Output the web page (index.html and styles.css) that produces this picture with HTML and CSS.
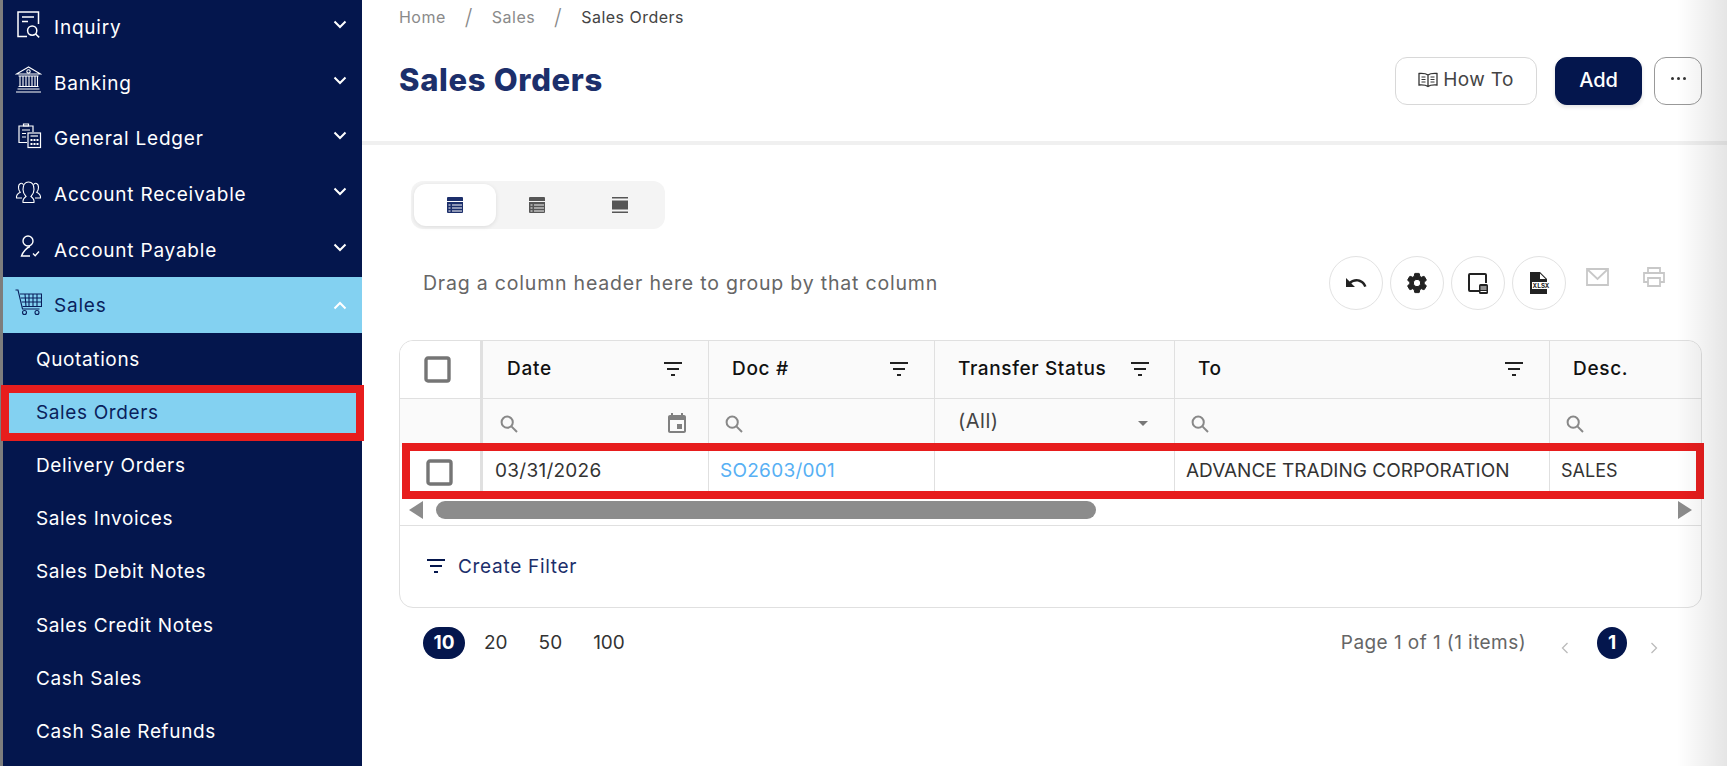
FILE: index.html
```html
<!DOCTYPE html>
<html lang="en">
<head>
<meta charset="utf-8">
<title>Sales Orders</title>
<link rel="stylesheet" href="styles.css">
</head>
<body>
<svg class="defs" width="0" height="0">
  <symbol id="i-filter" viewBox="0 0 18 14"><path d="M0 1h18M3 7h12M7 13h4" fill="none" stroke="currentColor" stroke-width="2"/></symbol>
  <symbol id="i-search" viewBox="0 0 18 18"><circle cx="7.2" cy="7.2" r="5.6" fill="none" stroke="currentColor" stroke-width="2"/><path d="M11.4 11.4l5.6 5.6" fill="none" stroke="currentColor" stroke-width="2"/></symbol>
  <symbol id="i-chev" viewBox="0 0 14 9"><path d="M1.5 1.5L7 7l5.5-5.5" fill="none" stroke="currentColor" stroke-width="2"/></symbol>
  <symbol id="i-check" viewBox="0 0 27 27"><rect x="2" y="2" width="23" height="23" rx="2" fill="#fff" stroke="#757575" stroke-width="3.4"/></symbol>
</svg>
<div class="app">
  <aside class="sidebar">
    <nav class="nav">
      <a class="nav-item">
        <svg class="nav-icon" viewBox="0 0 27 27"><g fill="none" stroke="currentColor" stroke-width="1.5"><path d="M12 25.5H3V1h20.5v12"/><path d="M7 6h12M7 10.5h6"/><circle cx="17.2" cy="19.6" r="4.6"/><path d="M20.6 23l3.6 3.4"/></g></svg>
        <span class="nav-label">Inquiry</span>
        <svg class="chev"><use href="#i-chev"/></svg>
      </a>
      <a class="nav-item">
        <svg class="nav-icon" viewBox="0 0 27 27"><g fill="none" stroke="currentColor" stroke-width="1.1"><path d="M13.5 1L1.5 8h24z"/><circle cx="13.5" cy="5.4" r="1.7"/><path d="M3.5 10h20M3.5 20.5h20M2.5 23h22M1 26h25"/><path d="M5 10v10.500M8 10v10.500M11 10v10.500M14 10v10.500M17 10v10.500M20 10v10.500M22.500 10v10.500"/></g></svg>
        <span class="nav-label">Banking</span>
        <svg class="chev"><use href="#i-chev"/></svg>
      </a>
      <a class="nav-item">
        <svg class="nav-icon" viewBox="0 0 27 27"><g fill="none" stroke="currentColor" stroke-width="1.2"><path d="M12 20.500H4V4h14v6"/><path d="M8.500 4V2h5v2zM7 8h8M7 11.500h4M7 15h4"/><rect x="13" y="11" width="12.500" height="14.500"/><path d="M15.500 14h7.500"/></g><path fill="currentColor" d="M15.500 17h2v2h-2zM18.500 17h2v2h-2zM21.500 17h2v2h-2zM15.500 21h2v2h-2zM18.500 21h2v2h-2zM21.500 21h2v2h-2z"/></svg>
        <span class="nav-label">General Ledger</span>
        <svg class="chev"><use href="#i-chev"/></svg>
      </a>
      <a class="nav-item">
        <svg class="nav-icon" viewBox="0 0 27 27"><g fill="none" stroke="currentColor" stroke-width="1.1"><path d="M8 24.500c-.5-3 1-4.500 3-6-1.500-1.500-3-3.500-3-7 0-4.500 2-7.500 5.500-7.500S19 7 19 11.500c0 3.500-1.500 5.500-3 7 2 1.500 3.500 3 3 6z"/><path d="M8.500 7C7 4 3.500 5 3.500 9.500c0 2 .5 3.500 1.800 4.800C3 15.500 1 17 1.500 20H7"/><path d="M18.500 7c1.500-3 5-2 5 2.500 0 2-.5 3.500-1.800 4.800 2.300 1.200 4.300 2.700 3.800 5.700H20"/></g></svg>
        <span class="nav-label">Account Receivable</span>
        <svg class="chev"><use href="#i-chev"/></svg>
      </a>
      <a class="nav-item">
        <svg class="nav-icon" viewBox="0 0 27 27"><g fill="none" stroke="currentColor" stroke-width="1.400"><circle cx="13" cy="8" r="5"/><path d="M15 13.500c-3 1-7 5-8.500 9.500H15"/><path d="M18 20.500l2.200 2.200 3.800-4.200"/></g></svg>
        <span class="nav-label">Account Payable</span>
        <svg class="chev"><use href="#i-chev"/></svg>
      </a>
      <a class="nav-item is-open">
        <svg class="nav-icon" viewBox="0 0 27 27"><g fill="none" stroke="currentColor" stroke-width="1.100"><path d="M.5 1H3l4.500 19h17"/><path d="M5 5h21.500v12.500H7.500"/><path d="M5.800 9h20.700M6.700 13h19.800M10 5l1 12.500M14 5v12.500M18 5v12.500M22 5v12.500"/><circle cx="9.500" cy="23.500" r="2"/><circle cx="22" cy="23.500" r="2"/></g></svg>
        <span class="nav-label">Sales</span>
        <svg class="chev chev-up"><use href="#i-chev"/></svg>
      </a>
      <a class="sub-item">Quotations</a>
      <a class="sub-item is-current">Sales Orders<span class="mark"></span></a>
      <a class="sub-item">Delivery Orders</a>
      <a class="sub-item">Sales Invoices</a>
      <a class="sub-item">Sales Debit Notes</a>
      <a class="sub-item">Sales Credit Notes</a>
      <a class="sub-item">Cash Sales</a>
      <a class="sub-item">Cash Sale Refunds</a>
    </nav>
  </aside>

  <main class="main">
    <header class="page-head">
      <div class="crumbs">
        <span>Home</span><i>/</i><span>Sales</span><i>/</i><span class="crumb-now">Sales Orders</span>
      </div>
      <div class="title-row">
        <h1 class="title">Sales Orders</h1>
        <div class="actions">
          <button class="btn btn-howto">
            <svg class="book" viewBox="0 0 20 16"><g fill="none" stroke="#333" stroke-width="1.300"><path d="M10 3C8 1.500 4 1.300 1 1.500v11.500c3-.2 7 0 9 1.500 2-1.500 6-1.700 9-1.500V1.500C16 1.300 12 1.500 10 3zM10 3v11.500"/><path d="M3.500 5h4M3.500 7.500h4M3.500 10h4M12.500 5h4M12.500 7.500h4M12.500 10h4" stroke-width="1"/></g></svg>
            How To
          </button>
          <button class="btn btn-add">Add</button>
          <button class="btn btn-more"><span></span><span></span><span></span></button>
        </div>
      </div>
    </header>

    <section class="content">
      <div class="views">
        <button class="view is-active"><svg viewBox="0 0 16 16"><path fill="currentColor" d="M1 0h14a1 1 0 0 1 1 1v14a1 1 0 0 1-1 1H1a1 1 0 0 1-1-1V1a1 1 0 0 1 1-1z"/><path stroke="#fff" stroke-width="1" d="M0 4.500h16M1.500 8h2M5 8h10M1.500 11h2M5 11h10M1.500 14h2M5 14h10"/></svg></button>
        <button class="view"><svg viewBox="0 0 16 16"><path fill="currentColor" d="M1 0h14a1 1 0 0 1 1 1v14a1 1 0 0 1-1 1H1a1 1 0 0 1-1-1V1a1 1 0 0 1 1-1z"/><path stroke="#f4f4f4" stroke-width="1" d="M0 4.500h16M1.500 8h2M5 8h10M1.500 11h2M5 11h10M1.500 14h2M5 14h10"/></svg></button>
        <button class="view"><svg viewBox="0 0 16 16"><path fill="currentColor" d="M0 0h16v1.500H0zM0 3.500h16v9H0zM0 14.500h16V16H0z"/></svg></button>
      </div>

      <div class="toolbar">
        <span class="group-hint">Drag a column header here to group by that column</span>
        <div class="tools">
          <button class="tool"><svg viewBox="0 0 24 24"><path fill="#222" d="M12.500 8c-2.650 0-5.050.99-6.900 2.600L2 7v9h9l-3.620-3.620c1.390-1.160 3.160-1.880 5.120-1.880 3.540 0 6.550 2.310 7.600 5.500l2.370-.78C21.080 11.030 17.150 8 12.500 8z"/></svg></button>
          <button class="tool"><svg viewBox="0 0 24 24"><path fill="#222" stroke="#222" stroke-width="1" d="M19.140 12.940c.04-.3.060-.61.060-.94 0-.32-.02-.64-.07-.94l2.030-1.580a.49.49 0 0 0 .12-.61l-1.920-3.320a.488.488 0 0 0-.59-.22l-2.390.96c-.5-.38-1.030-.7-1.620-.94l-.36-2.540a.484.484 0 0 0-.48-.41h-3.840c-.24 0-.43.17-.47.41l-.36 2.540c-.59.24-1.130.57-1.620.94l-2.390-.96c-.22-.08-.47 0-.59.22L2.740 8.870c-.12.21-.08.47.12.61l2.030 1.580c-.05.3-.09.63-.09.94s.02.64.07.94l-2.030 1.580a.49.49 0 0 0-.12.61l1.920 3.320c.12.22.37.29.59.22l2.390-.96c.5.38 1.030.7 1.620.94l.36 2.540c.05.24.24.41.48.41h3.840c.24 0 .44-.17.47-.41l.36-2.540c.59-.24 1.130-.56 1.620-.94l2.390.96c.22.08.47 0 .59-.22l1.920-3.320c.12-.22.07-.47-.12-.61l-2.010-1.580zM12 15.600c-1.980 0-3.600-1.620-3.600-3.600s1.620-3.600 3.600-3.600 3.600 1.620 3.600 3.600-1.620 3.600-3.600 3.600z"/></svg></button>
          <button class="tool"><svg viewBox="0 0 24 24"><path fill="none" stroke="#222" stroke-width="2" d="M13 20H4a1 1 0 0 1-1-1V4a1 1 0 0 1 1-1h15a1 1 0 0 1 1 1v8"/><rect x="13" y="13" width="9" height="10" rx="1.500" fill="#222"/><path stroke="#fff" stroke-width="1" d="M14.500 16h6M14.500 18h6M14.500 20.500h6"/></svg></button>
          <button class="tool"><svg viewBox="0 0 24 24"><path fill="#222" d="M3 1h10l7 7v15H3z"/><path fill="#fff" d="M13 2.500L18.500 8H13z"/><rect x="5" y="11" width="18" height="7" fill="#fff"/><text class="xlsx" x="14" y="17" text-anchor="middle">XLSX</text></svg></button>
          <button class="tool-flat"><svg viewBox="0 0 23 18"><path fill="none" stroke="#c8c8c8" stroke-width="1.800" d="M1 1h21v16H1zM1 1l10.500 10L22 1"/></svg></button>
          <button class="tool-flat print"><svg viewBox="0 0 22 20"><g fill="none" stroke="#c8c8c8" stroke-width="1.800"><path d="M5 6V1h12v5M5 15H1V6h20v9h-4"/><path d="M5 11h12v8H5z"/></g></svg></button>
        </div>
      </div>

      <div class="grid">
        <div class="row row-head">
          <div class="cell cell-check cell-white"><svg class="check"><use href="#i-check"/></svg></div>
          <div class="cell head-cell"><span>Date</span><svg class="filter"><use href="#i-filter"/></svg></div>
          <div class="cell head-cell"><span>Doc #</span><svg class="filter"><use href="#i-filter"/></svg></div>
          <div class="cell head-cell head-tight"><span>Transfer Status</span><svg class="filter"><use href="#i-filter"/></svg></div>
          <div class="cell head-cell"><span>To</span><svg class="filter"><use href="#i-filter"/></svg></div>
          <div class="cell head-cell cell-last"><span>Desc.</span></div>
        </div>
        <div class="row row-filter">
          <div class="cell cell-check"></div>
          <div class="cell search-cell"><svg class="search"><use href="#i-search"/></svg><svg class="cal" viewBox="0 0 24 24"><path fill="#808080" d="M17 12h-5v5h5v-5zM16 1v2H8V1H6v2H5c-1.110 0-1.990.9-1.990 2L3 19c0 1.100.89 2 2 2h14c1.100 0 2-.9 2-2V5c0-1.100-.9-2-2-2h-1V1h-2zm3 18H5V8h14v11z"/></svg></div>
          <div class="cell search-cell"><svg class="search"><use href="#i-search"/></svg></div>
          <div class="cell select-cell"><span>(All)</span><i class="caret"></i></div>
          <div class="cell search-cell"><svg class="search"><use href="#i-search"/></svg></div>
          <div class="cell search-cell cell-last"><svg class="search"><use href="#i-search"/></svg></div>
        </div>
        <div class="row row-data">
          <div class="cell cell-check cell-check-data"><svg class="check"><use href="#i-check"/></svg></div>
          <div class="cell data-cell data-spaced">03/31/2026</div>
          <div class="cell data-cell data-spaced link">SO2603/001</div>
          <div class="cell data-cell"></div>
          <div class="cell data-cell">ADVANCE TRADING CORPORATION</div>
          <div class="cell data-cell data-small cell-last">SALES</div>
          <span class="mark"></span>
        </div>
        <div class="scroll">
          <i class="arrow arrow-l"></i>
          <div class="track"><div class="thumb"></div></div>
          <i class="arrow arrow-r"></i>
        </div>
        <div class="filter-panel">
          <svg class="filter filter-navy"><use href="#i-filter"/></svg>
          <span>Create Filter</span>
        </div>
      </div>

      <div class="pager">
        <div class="sizes">
          <span class="size is-on">10</span><span class="size">20</span><span class="size">50</span><span class="size">100</span>
        </div>
        <div class="pages">
          <span class="page-info">Page 1 of 1 (1 items)</span>
          <svg class="page-arrow prev" viewBox="0 0 8 12"><path d="M6.500 1L1.500 6l5 5" fill="none" stroke="#bbb" stroke-width="1.300"/></svg>
          <span class="page-num">1</span>
          <svg class="page-arrow next" viewBox="0 0 8 12"><path d="M1.500 1l5 5-5 5" fill="none" stroke="#bbb" stroke-width="1.300"/></svg>
        </div>
      </div>
    </section>
  </main>
  <div class="edge-shade"></div>
</div>
</body>
</html>
```

FILE: styles.css
```css
* { box-sizing: border-box; }
html, body { margin: 0; height: 100%; overflow: hidden; background: #fff; }
body { font-family: Inter, "Noto Sans", "Liberation Sans", sans-serif; color: #222; }
button { font: inherit; cursor: pointer; }
.defs { position: absolute; }
.app { display: flex; height: 766px; position: relative; overflow: hidden; }

/* sidebar */
.sidebar { width: 362px; flex: none; background: #04164d; border-left: 3px solid #7d7d7d; color: #fff; position: relative; z-index: 1; }
.nav { margin-top: -1px; display: flex; flex-direction: column; }
.nav-item { height: 55.6px; flex: none; display: flex; align-items: center; padding: 2px 15px 0 12px; font-size: 19px; font-weight: 400; letter-spacing: .78px; }
.nav-icon { width: 27px; height: 27px; flex: none; margin: 0 12px 7px 0; color: #fff; }
.nav-label { flex: 1; }
.chev { width: 14px; height: 9px; color: #fff; margin-bottom: 6px; }
.chev-up { transform: rotate(180deg); margin-bottom: 0; }
.nav-item.is-open { background: #83d1f1; color: #0a1f5c; height: 56px; }
.nav-item.is-open .nav-icon { color: #0a1f5c; }
.sub-item { height: 53.2px; flex: none; display: flex; align-items: center; padding: 0 0 1px 33px; font-size: 19px; font-weight: 400; letter-spacing: .63px; position: relative; }
.sub-item.is-current { background: #83d1f1; color: #0a1f5c; }
.mark { position: absolute; border: 8px solid #e71d1d; pointer-events: none; }
.is-current .mark { left: -2px; right: -2px; top: -1px; bottom: -2px; }

/* main */
.main { flex: 1; min-width: 0; display: flex; flex-direction: column; }
.page-head { height: 145px; flex: none; border-bottom: 4px solid #f0f0f0; padding: 6px 25px 0 37px; }
.crumbs { display: flex; align-items: center; height: 22px; font-size: 16px; letter-spacing: .47px; color: #8a8a8a; }
.crumbs i { font-style: normal; font-size: 22px; font-weight: 300; margin: 0 19px; color: #888; }
.crumb-now { color: #444; }
.title-row { display: flex; justify-content: space-between; align-items: center; margin-top: 29px; height: 48px; }
.title { margin: 0 0 4px; font-size: 31px; font-weight: 800; color: #1c2f6b; letter-spacing: .67px; }
.actions { display: flex; }
.btn { height: 48px; border-radius: 12px; background: #fff; display: flex; align-items: center; justify-content: center; padding: 0 0 3px; }
.btn-howto { width: 142px; border: 1px solid #d8d8d8; font-size: 19px; color: #444; gap: 5px; margin-right: 18px; letter-spacing: .4px; }
.book { width: 20px; height: 16px; }
.btn-add { width: 87px; border: 1px solid #04164d; background: #04164d; color: #fff; font-size: 20px; font-weight: 500; margin-right: 12px; box-shadow: 0 2px 4px rgba(0,0,0,.12); }
.btn-more { width: 48px; border: 1px solid #999; gap: 3px; padding: 0 0 5px; }
.btn-more span { width: 3px; height: 3px; border-radius: 50%; background: #333; }

.content { padding: 36px 25px 0 37px; display: flex; flex-direction: column; }
.views { width: 254px; height: 48px; padding: 3px; background: #f4f4f4; border-radius: 12px; display: flex; margin-left: 12px; }
.view { width: 82.300px; height: 42px; border: 0; background: transparent; color: #565656; display: flex; align-items: center; justify-content: center; padding: 0; border-radius: 12px; }
.view svg { width: 16px; height: 16px; }
.view.is-active { background: #fff; color: #1c2f6b; box-shadow: 0 1px 4px rgba(0,0,0,.1); }

.toolbar { display: flex; justify-content: space-between; align-items: center; height: 54px; margin-top: 27px; padding-left: 24px; }
.group-hint { font-size: 19.500px; color: #666; letter-spacing: .8px; }
.tools { display: flex; align-items: center; margin-right: 37px; gap: 7px; }
.tool { width: 54px; height: 54px; border-radius: 50%; border: 1px solid #e2e2e2; background: #fff; display: flex; align-items: center; justify-content: center; padding: 0; }
.tool svg { width: 24px; height: 24px; }
.xlsx { font-family: "Liberation Mono", monospace; font-size: 6.800px; font-weight: 700; fill: #222; }
.tool-flat { width: 23px; height: 18px; border: 0; background: transparent; padding: 0; margin: 0 0 12px 13px; display: flex; }
.tool-flat svg { width: 23px; height: 18px; }
.tool-flat.print { width: 22px; height: 20px; margin-left: 27px; margin-right: 0; }
.tool-flat.print svg { width: 22px; height: 20px; }

.grid { margin-top: 30px; height: 268px; border: 1px solid #e0e0e0; border-radius: 14px; display: flex; flex-direction: column; position: relative; background: #fff; }
.row { display: grid; grid-template-columns: 83px 226px 226px 240px 375px 1fr; flex: none; position: relative; }
.cell { border-right: 1px solid #e0e0e0; display: flex; align-items: center; min-width: 0; }
.cell-last { border-right: 0; }
.cell-check { border-right: 3px solid #e0e0e0; }
.row-head { height: 58px; border-bottom: 1px solid #e0e0e0; background: #fafafa; border-radius: 14px 14px 0 0; }
.cell-white { background: #fff; border-radius: 14px 0 0 0; }
.check { width: 27px; height: 27px; flex: none; margin-left: 24px; }
.cell-check-data .check { margin-left: 26px; }
.head-cell { padding: 0 26px 2px 23px; justify-content: space-between; font-size: 19px; font-weight: 500; color: #111; letter-spacing: .7px; }
.cell-check + .head-cell { padding-left: 24px; }
.head-tight { padding-right: 25px; white-space: nowrap; letter-spacing: .62px; }
.filter { width: 18px; height: 14px; color: #222; flex: none; }
.row-filter { height: 48px; background: #fafafa; }
.search-cell { padding: 2px 21px 0 16px; justify-content: space-between; }
.cell-check + .search-cell { padding-left: 17px; }
.search { width: 18px; height: 18px; color: #888; flex: none; }
.cal { width: 24px; height: 24px; margin-right: -2px; }
.select-cell { padding: 0 26px 4px 23px; justify-content: space-between; font-size: 20px; letter-spacing: .5px; color: #444; }
.caret { border: 5px solid transparent; border-top: 5px solid #777; border-bottom: 0; margin-top: 5px; }
.row-data { height: 50px; }
.data-cell { padding: 0 0 3px 11px; font-size: 19px; color: #333; white-space: nowrap; }
.cell-check + .data-cell { padding-left: 12px; }
.data-spaced { letter-spacing: .27px; }
.data-small { font-size: 18px; }
.link { color: #57b0f4; }
.row-data .mark { left: 2px; right: -3px; top: -4px; bottom: -2px; }
.scroll { height: 29px; flex: none; border-bottom: 1px solid #e0e0e0; display: flex; align-items: center; padding: 0 9px 2px 9px; gap: 13px; }
.arrow { width: 0; height: 0; border-top: 9px solid transparent; border-bottom: 9px solid transparent; flex: none; }
.arrow-l { border-right: 14px solid #8c8c8c; }
.arrow-r { border-left: 14px solid #8c8c8c; }
.track { flex: 1; }
.thumb { width: 660px; height: 18px; border-radius: 9px; background: #8c8c8c; }
.filter-panel { flex: 1; display: flex; align-items: center; padding: 0 0 1px 27px; gap: 13px; font-size: 19px; color: #1c2f6b; letter-spacing: .7px; }
.filter-navy { color: #04164d; }

.pager { display: flex; justify-content: space-between; align-items: center; margin-top: 19px; height: 32px; padding: 0 44px 0 24px; }
.sizes { display: flex; align-items: center; font-size: 19px; color: #333; }
.size { height: 32px; display: flex; align-items: center; margin-right: 31px; padding-bottom: 2px; }
.size.is-on { width: 42px; justify-content: center; border-radius: 16px; background: #04164d; color: #fff; font-weight: 700; margin-right: 19px; }
.pages { display: flex; align-items: center; }
.page-info { font-size: 19px; color: #666; letter-spacing: .43px; margin-right: 35px; padding-bottom: 2px; }
.page-arrow { width: 8px; height: 12px; margin-top: 10px; }
.page-num { width: 30px; height: 32px; border-radius: 50%; background: #04164d; color: #fff; font-size: 19px; font-weight: 700; display: flex; align-items: center; justify-content: center; margin: 0 23px 0 28px; padding-bottom: 2px; }

.edge-shade { position: absolute; top: 0; right: 0; bottom: 0; width: 50px; background: linear-gradient(to right, rgba(0,0,0,0), rgba(0,0,0,.1)); pointer-events: none; }
```
